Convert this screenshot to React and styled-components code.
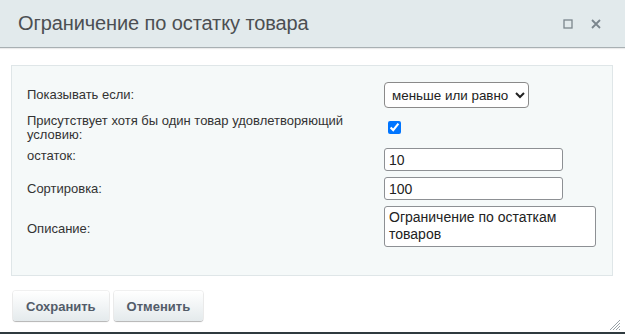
import React from "react";
import styled, { createGlobalStyle } from "styled-components";

const Global = createGlobalStyle`
  html, body {
    margin: 0;
    padding: 0;
    background: #fff;
  }
  body {
    font-family: "Liberation Sans", Arial, sans-serif;
  }
`;

const Dialog = styled.div`
  width: 625px;
  height: 334px;
  box-sizing: border-box;
  background: #fff;
  border-bottom: 2px solid #2f3a3f;
  display: flex;
  flex-direction: column;
  position: relative;
`;

const Header = styled.div`
  height: 47px;
  flex-shrink: 0;
  background: #e2eaec;
  border-bottom: 1px solid #a8b0b3;
  display: flex;
  align-items: center;
  padding: 0 18px 0 18px;
  box-shadow: 0 1px 1px rgba(0, 0, 0, 0.08);
`;

const Title = styled.h1`
  flex: 1;
  margin: 0;
  font-size: 20px;
  font-weight: normal;
  color: #4c4f52;
  letter-spacing: -0.1px;
`;

const HeaderIcons = styled.div`
  display: flex;
  gap: 13px;
  align-items: center;
  margin-right: 4px;
`;

const IconBtn = styled.span`
  width: 15px;
  height: 15px;
  display: flex;
  align-items: center;
  justify-content: center;
  color: #7b868d;
`;

const Content = styled.div`
  padding: 17px 12px 0 11px;
`;

const Panel = styled.div`
  background: #f5f9f9;
  border: 1px solid #dfe6e8;
  padding: 13px 0 21px 0;
`;

const Row = styled.div`
  display: grid;
  grid-template-columns: 372px 1fr;
  align-items: center;
  padding: 3px 0;
`;

const Label = styled.div`
  padding-left: 15px;
  padding-right: 14px;
  font-size: 13px;
  line-height: 14px;
  color: #333;
  margin-top: ${(p) => p.$shift || 0}px;
`;

const Select = styled.select`
  height: 26px;
  width: 145px;
  font-family: "Liberation Sans", Arial, sans-serif;
  font-size: 13.4px;
  color: #222;
  border: 1px solid #8a8a8a;
  border-radius: 4px;
  background: #fff;
  padding: 0 0 0 3px;
`;

const Check = styled.input`
  margin: 3px 3px 3px 4px;
  width: 13px;
  height: 13px;
`;

const TextInput = styled.input`
  box-sizing: border-box;
  width: 179px;
  height: 23px;
  font-family: "Liberation Sans", Arial, sans-serif;
  font-size: 14px;
  color: #222;
  border: 1px solid #8d9094;
  border-radius: 3px;
  padding: 0 4px;
  background: #fff;
`;

const TextArea = styled.textarea`
  box-sizing: border-box;
  width: 212px;
  height: 41px;
  font-family: "Liberation Sans", Arial, sans-serif;
  font-size: 14px;
  line-height: 17px;
  color: #222;
  border: 1px solid #8d9094;
  border-radius: 3px;
  padding: 2px 4px;
  resize: none;
  background: #fff;
  overflow: hidden;
`;

const Footer = styled.div`
  display: flex;
  gap: 5px;
  padding: 15px 13px 0 13px;
`;

const Button = styled.button`
  height: 30px;
  padding: 0 13px;
  font-family: "Liberation Sans", Arial, sans-serif;
  font-size: 13px;
  font-weight: bold;
  color: #535c69;
  border: none;
  border-radius: 3px;
  background: linear-gradient(#ffffff, #e4eaec);
  box-shadow: 0 1px 1px rgba(0, 0, 0, 0.25), 0 0 0 1px rgba(0, 0, 0, 0.06);
  cursor: pointer;
`;

const Grip = styled.svg`
  position: absolute;
  right: 4px;
  bottom: 1px;
`;

export default function App() {
  return (
    <Dialog>
      <Global />
      <Header>
        <Title>Ограничение по остатку товара</Title>
        <HeaderIcons>
          <IconBtn>
            <svg width="10" height="10" viewBox="0 0 10 10">
              <rect x="1" y="1" width="8" height="8" fill="none" stroke="currentColor" strokeWidth="1.3" />
            </svg>
          </IconBtn>
          <IconBtn>
            <svg width="10" height="10" viewBox="0 0 10 10">
              <path d="M1 1 L9 9 M9 1 L1 9" stroke="currentColor" strokeWidth="1.8" />
            </svg>
          </IconBtn>
        </HeaderIcons>
      </Header>
      <Content>
        <Panel>
          <Row>
            <Label>Показывать если:</Label>
            <div>
              <Select defaultValue="le">
                <option value="le">меньше или равно</option>
                <option value="ge">больше или равно</option>
              </Select>
            </div>
          </Row>
          <Row>
            <Label>Присутствует хотя бы один товар удовлетворяющий условию:</Label>
            <div>
              <Check type="checkbox" defaultChecked />
            </div>
          </Row>
          <Row>
            <Label $shift={-8}>остаток:</Label>
            <div>
              <TextInput defaultValue="10" />
            </div>
          </Row>
          <Row>
            <Label>Сортировка:</Label>
            <div>
              <TextInput defaultValue="100" />
            </div>
          </Row>
          <Row>
            <Label>Описание:</Label>
            <div>
              <TextArea defaultValue="Ограничение по остаткам товаров" />
            </div>
          </Row>
        </Panel>
      </Content>
      <Footer>
        <Button>Сохранить</Button>
        <Button>Отменить</Button>
      </Footer>
      <Grip width="14" height="14" viewBox="0 0 14 14">
        <path d="M13 3 L3 13 M13 6 L6 13 M13 9 L9 13 M13 12 L12 13" stroke="#9aa3a8" strokeWidth="1" />
      </Grip>
    </Dialog>
  );
}
